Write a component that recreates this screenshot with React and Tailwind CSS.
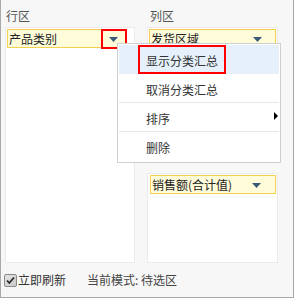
import React from "react";

const font = { fontFamily: '"Noto Sans CJK SC", "Noto Sans", sans-serif' };

function Arrow() {
  return (
    <svg width="9" height="5" viewBox="0 0 9 5" className="block">
      <polygon points="0,0 9,0 4.5,5" fill="#3a5a7a" />
    </svg>
  );
}

function Field({ text, arrowRight }) {
  return (
    <div className="relative h-[19px] bg-[#fffcda] border border-[#f5cf4f] flex items-center pl-[1px] text-[12px] leading-[17px] text-[#222]">
      <span>{text}</span>
      <div className={`absolute top-[7px] ${arrowRight}`}>
        <Arrow />
      </div>
    </div>
  );
}

export default function App() {
  return (
    <div
      className="relative w-[294px] h-[298px] bg-[#f7f7f7] border-l border-r border-b border-[#a9a9a9] overflow-hidden"
      style={font}
    >
      <div className="flex pl-[4px] gap-[12px]">
        {/* Left column */}
        <div className="w-[130px] flex flex-col">
          <div className="h-[27px] pt-[8px] pl-[1px] text-[12px] leading-[16px] text-[#555]">行区</div>
          <div className="h-[236px] bg-white border border-[#ebebeb] p-[1px] pr-[8px]">
            <Field text="产品类别" arrowRight="right-[7px]" />
          </div>
        </div>
        {/* Right column */}
        <div className="w-[131px] flex flex-col">
          <div className="h-[27px] pt-[8px] pl-[3px] text-[12px] leading-[16px] text-[#555]">列区</div>
          <div className="h-[123px] bg-white border border-[#ebebeb] py-[1px] pl-[1px] pr-[1px]">
            <Field text="发货区域" arrowRight="right-[13px]" />
          </div>
          <div className="h-[23px]" />
          <div className="h-[90px] bg-white border border-[#ebebeb] py-[1px] pl-[2px] pr-[1px]">
            <Field text="销售额(合计值)" arrowRight="right-[14px]" />
          </div>
        </div>
      </div>

      {/* Bottom bar */}
      <div className="flex items-center h-[34px] pl-[3px] text-[12px] text-[#333]">
        <svg width="13" height="13" viewBox="0 0 13 13" className="block">
          <defs>
            <linearGradient id="cbg" x1="0" y1="0" x2="1" y2="1">
              <stop offset="0" stopColor="#e6e6e6" />
              <stop offset="1" stopColor="#c8c8c8" />
            </linearGradient>
          </defs>
          <rect x="0.5" y="0.5" width="12" height="12" rx="1.5" fill="url(#cbg)" stroke="#8a8a8a" />
          <path d="M3 6.5 L5.3 9 L10 3.5" fill="none" stroke="#2a2a2a" strokeWidth="1.8" />
        </svg>
        <span className="ml-[1px] leading-[16px]">立即刷新</span>
        <span className="ml-[21px] leading-[16px] text-[#444]">当前模式: 待选区</span>
      </div>

      {/* Red highlight around left field arrow */}
      <div className="absolute left-[100px] top-[29px] w-[26px] h-[20px] border-2 border-[#ff0000]" />

      {/* Context menu */}
      <div className="absolute left-[116px] top-[43px] w-[164px] bg-white border border-[#cfcfcf] p-[1px] text-[12px] text-[#333]">
        <div className="relative h-[29px] bg-[#e5f0fb] flex items-center pt-[3px] pl-[27px]">
          显示分类汇总
          <div className="absolute left-[19px] top-0 w-[88px] h-[29px] border-2 border-[#ff0000]" />
        </div>
        <div className="h-[28px] flex items-center pt-[3px] pl-[27px]">取消分类汇总</div>
        <div className="h-px bg-[#e6e6e6]" />
        <div className="relative h-[28px] flex items-center pt-[3px] pl-[27px]">
          排序
          <svg width="4" height="8" viewBox="0 0 4 8" className="absolute right-[1px] top-[9px]">
            <polygon points="0,0 4,4 0,8" fill="#000" />
          </svg>
        </div>
        <div className="h-px bg-[#e6e6e6]" />
        <div className="h-[29px] flex items-center pt-[3px] pl-[27px]">删除</div>
      </div>
    </div>
  );
}
